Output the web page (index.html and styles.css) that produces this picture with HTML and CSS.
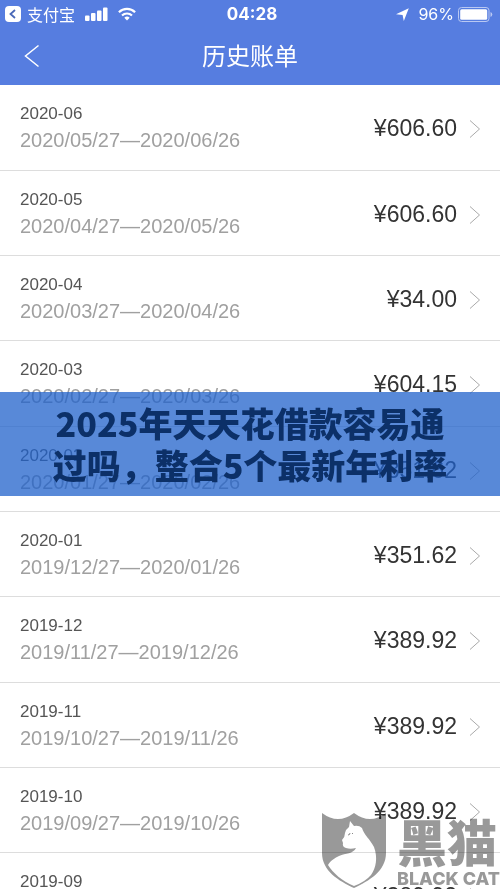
FILE: index.html
```
<!DOCTYPE html>
<html lang="zh-CN">
<head>
  <meta charset="UTF-8">
  <meta name="viewport" content="width=device-width, initial-scale=1.0">
  <title>历史账单</title>
  <link rel="stylesheet" href="styles.css">
</head>
<body>
  <div class="screen">
    <header class="top-bar">
      <div class="status-bar">
        <div class="status-left">
          <a href="#" class="back-app">
            <svg width="16" height="16" viewBox="0 0 16 16">
              <rect width="16" height="16" rx="4" fill="#fff"/>
              <path d="M10 4L5.500 8L10 12" fill="none" stroke="#4a69b8" stroke-width="1.800"/>
            </svg>
            <span>支付宝</span>
          </a>
          <svg width="23" height="14" viewBox="0 0 23 14" fill="#fff">
            <rect x="0" y="8.500" width="4.500" height="5.500" rx="1"/>
            <rect x="6" y="6" width="4.500" height="8" rx="1"/>
            <rect x="12" y="3.500" width="4.500" height="10.500" rx="1"/>
            <rect x="18" y="0.500" width="4.500" height="13.500" rx="1"/>
          </svg>
          <svg width="18" height="14" viewBox="0 0 18 14" fill="none" stroke="#fff" stroke-width="2.200">
            <path d="M0.900 5.200a11.600 11.600 0 0 1 16.200 0"/>
            <path d="M4 8.500a7.200 7.200 0 0 1 10 0"/>
            <path d="M9 13.500L6.300 10.800a3.900 3.900 0 0 1 5.400 0z" fill="#fff" stroke="none"/>
          </svg>
        </div>
        <span class="status-time">04:28</span>
        <div class="status-right">
          <svg class="location" width="13" height="13" viewBox="0 0 13 13" fill="#fff">
            <path d="M12.800 0.200L7.800 13L6.600 7L0 6.200z"/>
          </svg>
          <span>96%</span>
          <svg width="35" height="15" viewBox="0 0 35 15">
            <rect x="0.500" y="0.500" width="30.500" height="14" rx="3" fill="none" stroke="#b9c8f2"/>
            <rect x="2.200" y="2.200" width="27" height="10.600" rx="1.500" fill="#fff"/>
            <path d="M32.500 5v5q1.800-.8 1.800-2.500T32.500 5z" fill="#b9c8f2"/>
          </svg>
        </div>
      </div>
      <div class="nav-bar">
        <button class="back-button" aria-label="返回">
          <svg width="16" height="24" viewBox="0 0 16 24" fill="none" stroke="#fff" stroke-width="1.500">
            <path d="M14.500 1.500L1.500 12L14.500 22.500"/>
          </svg>
        </button>
        <h1 class="title">历史账单</h1>
      </div>
    </header>

    <main class="bill-list">
      <a href="#" class="bill">
        <div class="bill-info"><span class="month">2020-06</span><span class="range">2020/05/27—2020/06/26</span></div>
        <span class="amount">¥606.60</span>
        <svg class="arrow" width="12" height="20" viewBox="0 0 12 20"><path d="M1 1.500L10.500 10L1 18.500"/></svg>
      </a>
      <a href="#" class="bill">
        <div class="bill-info"><span class="month">2020-05</span><span class="range">2020/04/27—2020/05/26</span></div>
        <span class="amount">¥606.60</span>
        <svg class="arrow" width="12" height="20" viewBox="0 0 12 20"><path d="M1 1.500L10.500 10L1 18.500"/></svg>
      </a>
      <a href="#" class="bill">
        <div class="bill-info"><span class="month">2020-04</span><span class="range">2020/03/27—2020/04/26</span></div>
        <span class="amount">¥34.00</span>
        <svg class="arrow" width="12" height="20" viewBox="0 0 12 20"><path d="M1 1.500L10.500 10L1 18.500"/></svg>
      </a>
      <a href="#" class="bill">
        <div class="bill-info"><span class="month">2020-03</span><span class="range">2020/02/27—2020/03/26</span></div>
        <span class="amount">¥604.15</span>
        <svg class="arrow" width="12" height="20" viewBox="0 0 12 20"><path d="M1 1.500L10.500 10L1 18.500"/></svg>
      </a>
      <a href="#" class="bill">
        <div class="bill-info"><span class="month">2020-02</span><span class="range">2020/01/27—2020/02/26</span></div>
        <span class="amount">¥351.62</span>
        <svg class="arrow" width="12" height="20" viewBox="0 0 12 20"><path d="M1 1.500L10.500 10L1 18.500"/></svg>
      </a>
      <a href="#" class="bill">
        <div class="bill-info"><span class="month">2020-01</span><span class="range">2019/12/27—2020/01/26</span></div>
        <span class="amount">¥351.62</span>
        <svg class="arrow" width="12" height="20" viewBox="0 0 12 20"><path d="M1 1.500L10.500 10L1 18.500"/></svg>
      </a>
      <a href="#" class="bill">
        <div class="bill-info"><span class="month">2019-12</span><span class="range">2019/11/27—2019/12/26</span></div>
        <span class="amount">¥389.92</span>
        <svg class="arrow" width="12" height="20" viewBox="0 0 12 20"><path d="M1 1.500L10.500 10L1 18.500"/></svg>
      </a>
      <a href="#" class="bill">
        <div class="bill-info"><span class="month">2019-11</span><span class="range">2019/10/27—2019/11/26</span></div>
        <span class="amount">¥389.92</span>
        <svg class="arrow" width="12" height="20" viewBox="0 0 12 20"><path d="M1 1.500L10.500 10L1 18.500"/></svg>
      </a>
      <a href="#" class="bill">
        <div class="bill-info"><span class="month">2019-10</span><span class="range">2019/09/27—2019/10/26</span></div>
        <span class="amount">¥389.92</span>
        <svg class="arrow" width="12" height="20" viewBox="0 0 12 20"><path d="M1 1.500L10.500 10L1 18.500"/></svg>
      </a>
      <a href="#" class="bill">
        <div class="bill-info"><span class="month">2019-09</span><span class="range">2019/08/27—2019/09/26</span></div>
        <span class="amount">¥389.92</span>
        <svg class="arrow" width="12" height="20" viewBox="0 0 12 20"><path d="M1 1.500L10.500 10L1 18.500"/></svg>
      </a>
    </main>

    <div class="banner">2025年天天花借款容易通过吗，整合5个最新年利率</div>

    <div class="watermark">
      <svg width="66" height="78" viewBox="0 0 66 78">
        <path d="M1 2Q17 14 33 2Q49 14 65 2V42C65 60 48 70 33 77C18 70 1 60 1 42z" fill="#999"/>
        <path d="M29 10L33 15Q38 14 41 17C43 24 49 28 53 36C57 47 55 57 50 64Q44 71 33 75C21 70 12 62 7 54C10 49 14 47 18 45C25 42 32 43 35 37C31 38 28 38 25 37Q21 36 22 32L21 29Q24 26 24 22Q25 18 28 16z" fill="#fff"/>
        <path d="M27 24q2 0 2-2M31 23l1-1" fill="none" stroke="#888"/>
      </svg>
      <div class="watermark-text">
        <span class="watermark-cn">黑猫</span>
        <span class="watermark-en">BLACK CAT</span>
      </div>
    </div>
  </div>
</body>
</html>
```
FILE: styles.css
```
* {
  box-sizing: border-box;
}

body {
  margin: 0;
  background-color: #fff;
  font-family: "Liberation Sans", "Noto Sans CJK SC", sans-serif;
}

a {
  color: inherit;
  text-decoration: none;
}

svg {
  display: block;
  flex-shrink: 0;
}

.screen {
  position: relative;
  display: flex;
  flex-direction: column;
  height: 100vh;
  overflow: hidden;
}

/* Header */
.top-bar {
  flex-shrink: 0;
  background-color: #567de0;
  color: #fff;
}

.status-bar {
  display: grid;
  grid-template-columns: 1fr auto 1fr;
  align-items: center;
  height: 28px;
  padding: 0 7px 0 5px;
  font-family: Inter, "Noto Sans CJK SC", sans-serif;
  font-size: 16px;
}

.status-left,
.status-right,
.back-app {
  display: flex;
  align-items: center;
}

.status-left {
  gap: 10px;
}

.back-app {
  gap: 6px;
}

.status-time {
  padding-left: 6px;
  font-size: 17px;
  font-weight: 700;
}

.status-right {
  justify-content: flex-end;
  gap: 4px;
}

.location {
  margin-right: 5px;
}

.nav-bar {
  position: relative;
  height: 57px;
}

.title {
  margin: 0;
  font-size: 24px;
  font-weight: 400;
  line-height: 57px;
  text-align: center;
}

.back-button {
  position: absolute;
  top: 0;
  left: 0;
  height: 56px;
  padding: 0 24px;
  border: none;
  background: none;
}

/* Bills */
.bill-list {
  flex: 1;
  min-height: 0;
  overflow-y: auto;
  scrollbar-width: none;
}

.bill {
  display: flex;
  align-items: flex-start;
  height: 85px;
  padding: 18px 19px 0 20px;
  border-bottom: 1px solid #ddd;
}

.bill:nth-child(3n+1) {
  height: 86px;
}

.bill-info {
  display: flex;
  flex: 1;
  flex-direction: column;
}

.month {
  font-size: 17px;
  line-height: 22px;
  color: #555;
}

.range {
  font-size: 20px;
  line-height: 31px;
  color: #a0a0a0;
}

.amount {
  padding-top: 10px;
  font-size: 23px;
  line-height: 30px;
  color: #333;
}

.arrow {
  margin: 16px 0 0 12px;
  fill: none;
  stroke: #aaa;
}

/* Overlays */
.banner {
  position: absolute;
  top: 392px;
  left: 0;
  right: 0;
  padding: 10px 50px;
  background-color: rgba(32, 97, 203, 0.75);
  color: #0c3068;
  font-family: "Noto Sans CJK SC", sans-serif;
  font-size: 34px;
  font-weight: 900;
  line-height: 42px;
  text-align: center;
}

.watermark {
  position: absolute;
  right: 0;
  bottom: 0;
  display: flex;
  gap: 10px;
  mix-blend-mode: multiply;
  color: #999;
}

.watermark-text {
  display: flex;
  flex-direction: column;
}

.watermark-cn {
  font-family: "Noto Sans CJK SC", sans-serif;
  font-size: 50px;
  font-weight: 900;
  line-height: 58px;
}

.watermark-en {
  font-family: Inter, sans-serif;
  font-size: 18px;
  font-weight: 800;
  line-height: 20px;
}
```
